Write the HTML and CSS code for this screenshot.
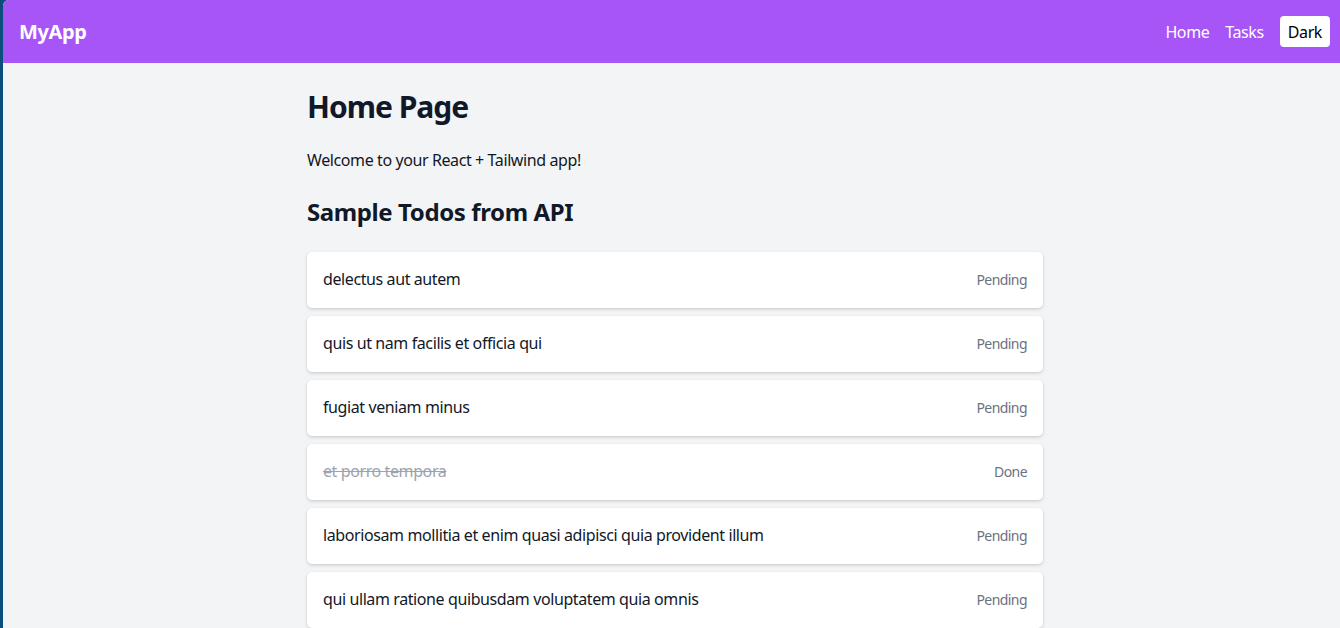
FILE: index.html
```html
<!DOCTYPE html>
<html lang="en">
<head>
<meta charset="utf-8">
<title>MyApp</title>
<link rel="stylesheet" href="styles.css">
</head>
<body>
<div class="app">
  <header class="topbar">
    <div class="brand">MyApp</div>
    <nav class="nav">
      <a class="nav-link" href="#">Home</a>
      <a class="nav-link" href="#">Tasks</a>
      <button class="theme-btn">Dark</button>
    </nav>
  </header>
  <main class="main">
    <div class="content">
      <h1 class="title">Home Page</h1>
      <p class="intro">Welcome to your React + Tailwind app!</p>
      <h2 class="subtitle">Sample Todos from API</h2>
      <ul class="todos">
        <li class="todo"><span class="todo-text">delectus aut autem</span><span class="todo-status">Pending</span></li>
        <li class="todo"><span class="todo-text">quis ut nam facilis et officia qui</span><span class="todo-status">Pending</span></li>
        <li class="todo"><span class="todo-text">fugiat veniam minus</span><span class="todo-status">Pending</span></li>
        <li class="todo"><span class="todo-text done">et porro tempora</span><span class="todo-status">Done</span></li>
        <li class="todo"><span class="todo-text">laboriosam mollitia et enim quasi adipisci quia provident illum</span><span class="todo-status">Pending</span></li>
        <li class="todo"><span class="todo-text">qui ullam ratione quibusdam voluptatem quia omnis</span><span class="todo-status">Pending</span></li>
      </ul>
    </div>
  </main>
</div>
</body>
</html>
```
FILE: styles.css
```css
* { box-sizing: border-box; }
html, body { margin: 0; padding: 0; height: 100%; overflow: hidden; }
body {
  background: #0b4d7d;
  font-family: "Noto Sans", "Open Sans", sans-serif;
  letter-spacing: -0.025em;
  color: #111827;
}
.app {
  margin-left: 3px;
  min-height: 100%;
  background: #f3f4f6;
  border-top-left-radius: 6px;
  overflow: hidden;
}
.topbar {
  height: 63px;
  background: #a855f7;
  display: flex;
  align-items: center;
  justify-content: space-between;
  padding: 0 10px 0 16px;
}
.brand {
  color: #fff;
  font-weight: 700;
  font-size: 20px;
}
.nav { display: flex; align-items: center; }
.nav-link {
  color: #fff;
  text-decoration: none;
  font-size: 16px;
  margin-right: 16px;
}
.theme-btn {
  font-family: inherit;
  letter-spacing: inherit;
  font-size: 16px;
  color: #000;
  background: #fff;
  border: 0;
  border-radius: 4px;
  height: 31px;
  padding: 0 8px;
}
.main {
  padding: 26px 0 0 304px;
}
.content { width: 736px; }
.title {
  margin: 0 0 23px;
  font-size: 30px;
  line-height: 36px;
  font-weight: 700;
  letter-spacing: -0.033em;
}
.intro {
  margin: 0 0 24px;
  font-size: 16px;
  line-height: 24px;
}
.subtitle {
  margin: 0 0 24px;
  font-size: 24px;
  line-height: 32px;
  font-weight: 700;
}
.todos {
  list-style: none;
  margin: 0;
  padding: 0;
  display: flex;
  flex-direction: column;
  gap: 8px;
}
.todo {
  background: #fff;
  border-radius: 5px;
  box-shadow: 0 1px 3px rgba(0,0,0,0.12), 0 2px 4px rgba(0,0,0,0.06);
  padding: 15px 16px 17px;
  display: flex;
  justify-content: space-between;
  align-items: center;
  height: 56px;
}
.todo-text { font-size: 16px; line-height: 24px; }
.todo-text.done { text-decoration: line-through; color: #9ca3af; }
.todo-status { font-size: 14px; color: #6b7280; letter-spacing: -0.04em; }
```
